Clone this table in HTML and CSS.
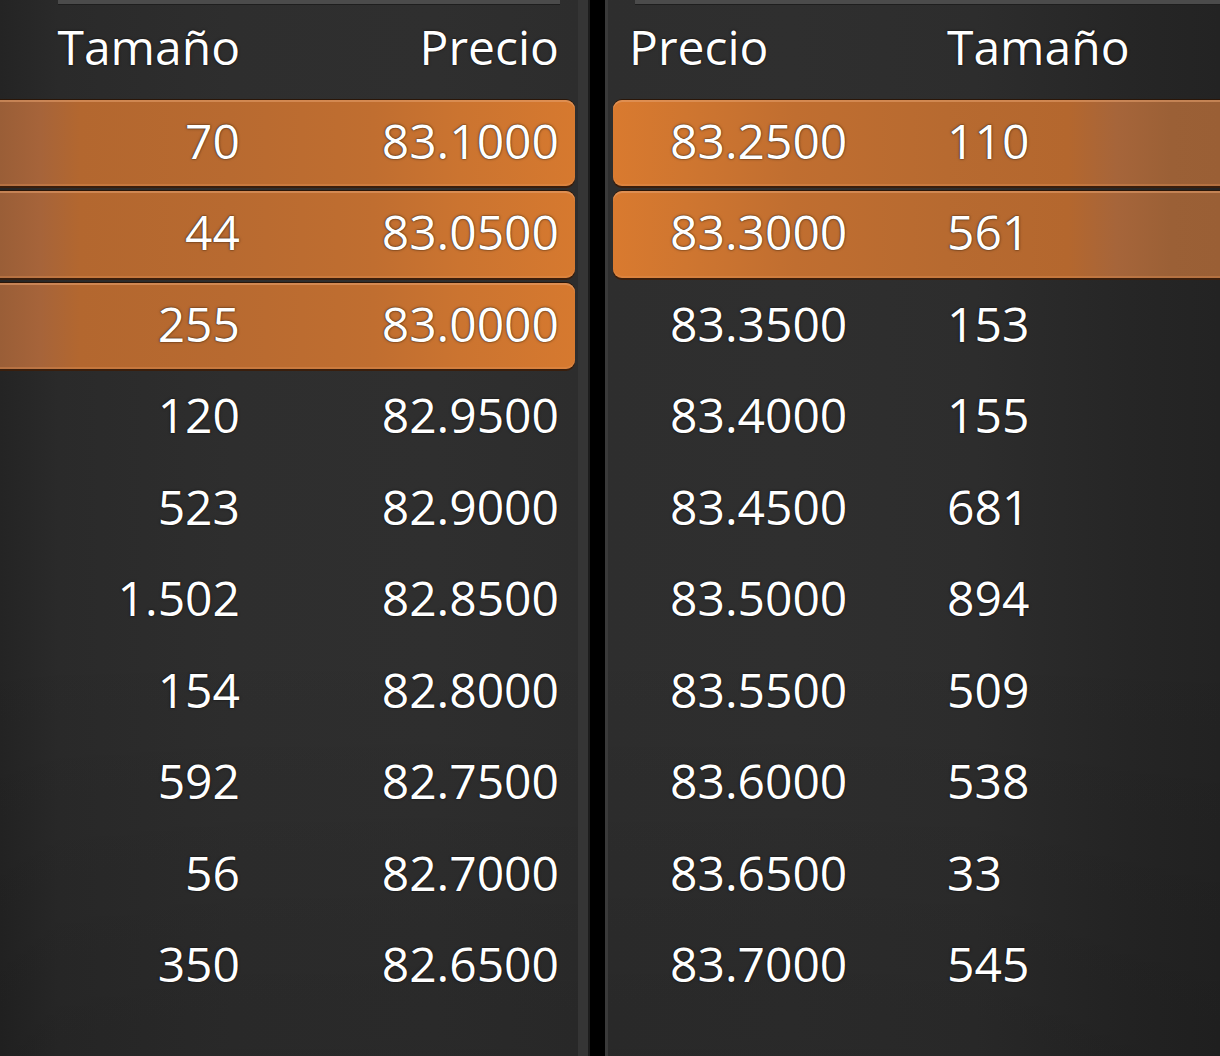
FILE: index.html
```html
<!DOCTYPE html>
<html lang="es">
<head>
<meta charset="utf-8">
<title>Libro de órdenes</title>
<link rel="stylesheet" href="styles.css">
</head>
<body>
<main class="book">
  <section class="side bids">
    <div class="topbar"></div>
    <div class="head"><span>Tamaño</span><span>Precio</span></div>
    <div class="rows">
      <div class="row hl"><span>70</span><span>83.1000</span></div>
      <div class="row hl"><span>44</span><span>83.0500</span></div>
      <div class="row hl"><span>255</span><span>83.0000</span></div>
      <div class="row"><span>120</span><span>82.9500</span></div>
      <div class="row"><span>523</span><span>82.9000</span></div>
      <div class="row"><span>1.502</span><span>82.8500</span></div>
      <div class="row"><span>154</span><span>82.8000</span></div>
      <div class="row"><span>592</span><span>82.7500</span></div>
      <div class="row"><span>56</span><span>82.7000</span></div>
      <div class="row"><span>350</span><span>82.6500</span></div>
    </div>
  </section>
  <div class="divider"></div>
  <section class="side asks">
    <div class="topbar"></div>
    <div class="head"><span>Precio</span><span>Tamaño</span></div>
    <div class="rows">
      <div class="row hl"><span>83.2500</span><span>110</span></div>
      <div class="row hl"><span>83.3000</span><span>561</span></div>
      <div class="row"><span>83.3500</span><span>153</span></div>
      <div class="row"><span>83.4000</span><span>155</span></div>
      <div class="row"><span>83.4500</span><span>681</span></div>
      <div class="row"><span>83.5000</span><span>894</span></div>
      <div class="row"><span>83.5500</span><span>509</span></div>
      <div class="row"><span>83.6000</span><span>538</span></div>
      <div class="row"><span>83.6500</span><span>33</span></div>
      <div class="row"><span>83.7000</span><span>545</span></div>
    </div>
  </section>
</main>
</body>
</html>
```

FILE: styles.css
```css
* { box-sizing: border-box; }

html, body {
  margin: 0;
  padding: 0;
  width: 1220px;
  height: 1056px;
  overflow: hidden;
  background: #2b2b2b;
}

body {
  font-family: "Open Sans", "Noto Sans", sans-serif;
  font-size: 48px;
  color: #ffffff;
}

.book {
  display: flex;
  height: 1056px;
}

.side {
  display: flex;
  flex-direction: column;
  height: 100%;
}

.bids {
  width: 588px;
  border-right: 10px solid #353535;
  background:
    linear-gradient(to bottom, rgba(0,0,0,0) 60%, rgba(0,0,0,0.12) 100%),
    linear-gradient(to right, #242424 0, #2a2a2a 10%, #2e2e2e 40%, #2f2f2f 75%, #2d2d2d 100%);
}

.divider {
  width: 17px;
  background: #000;
  border-left: 2px solid #1c1c1c;
}

.asks {
  flex: 1;
  border-left: 3px solid #3a3a3a;
  background:
    linear-gradient(to bottom, rgba(0,0,0,0) 60%, rgba(0,0,0,0.12) 100%),
    linear-gradient(to right, #2e2e2e 0, #2f2f2f 30%, #2d2d2d 60%, #262626 85%, #232323 100%);
}

.topbar {
  height: 5px;
  border-bottom: 1px solid #1e1e1e;
}

.bids .topbar {
  margin: 0 18px 0 58px;
  background: #4b4b4b;
}

.asks .topbar {
  margin-left: 27px;
  background: #4b4b4b;
}

.head {
  height: 92px;
  display: grid;
  align-items: center;
  padding-bottom: 9px;
  line-height: 1;
  text-shadow: 0 0 1px rgba(0,0,0,0.9), 0 0 3px rgba(0,0,0,0.5);
}

.bids .head {
  grid-template-columns: 240px 1fr;
  text-align: right;
  padding-right: 19px;
}

.asks .head {
  grid-template-columns: 318px 1fr;
  padding-left: 21px;
}

.rows {
  padding-top: 2.5px;
  display: flex;
  flex-direction: column;
  gap: 5px;
}

.row {
  height: 86.5px;
  display: grid;
  align-items: center;
  padding-bottom: 4px;
  line-height: 1;
  text-shadow: 0 0 1px rgba(0,0,0,0.9), 0 0 3px rgba(0,0,0,0.5);
}

.bids .row {
  grid-template-columns: 240px 1fr;
  text-align: right;
  margin-right: 3px;
  padding-right: 16px;
}

.asks .row {
  grid-template-columns: 277px 1fr;
  margin-left: 5px;
  padding-left: 57px;
}

.row.hl {
  box-shadow:
    inset 0 2px 0 rgba(230,160,110,0.55),
    inset 0 -2px 0 rgba(230,150,90,0.35),
    0 2px 0 #3a1e0c,
    0 -1px 0 #2a1608;
}

.bids .row.hl {
  border-radius: 0 9px 9px 0;
  background: linear-gradient(to right, #9a5e37 0, #a6643a 7%, #b3672f 14%, #b86a30 40%, #c06e30 65%, #cb7430 80%, #d6792f 100%);
}

.asks .row.hl {
  border-radius: 9px 0 0 9px;
  background: linear-gradient(to right, #d97a2f 0, #cf7630 12%, #c06e30 30%, #b76a30 55%, #b4672e 75%, #a6653a 83%, #9b6036 92%, #9a5f35 100%);
}
```
